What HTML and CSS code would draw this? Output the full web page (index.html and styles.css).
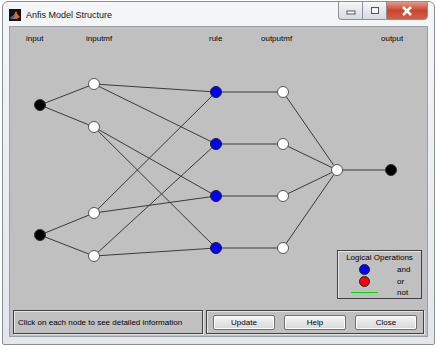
FILE: index.html
```html
<!DOCTYPE html>
<html lang="en">
<head>
    <meta charset="UTF-8">
    <title>Anfis Model Structure</title>
    <link rel="stylesheet" href="styles.css">
</head>
<body>
    <div class="window">
        <div class="titlebar">
            <svg class="app-icon" width="12" height="12" viewBox="0 0 12 12">
                <rect width="12" height="12" fill="#111"/>
                <path d="M1 9 L5 6 L7 2 L9 6 L11 8 L8 10 L4 10 Z" fill="#e06a1a"/>
                <path d="M1 9 L5 6 L6 8 L3 10 Z" fill="#2a6ad0"/>
            </svg>
            <span class="title">Anfis Model Structure</span>
            <div class="controls">
                <div class="ctl">
                    <svg width="10" height="8" viewBox="0 0 10 8"><rect x="1" y="4" width="8" height="3" fill="#fff" stroke="#555" stroke-width="1"/></svg>
                </div>
                <div class="ctl">
                    <svg width="10" height="9" viewBox="0 0 10 9"><rect x="1.5" y="1.5" width="7" height="6" fill="none" stroke="#555" stroke-width="1"/><rect x="2.5" y="3" width="5" height="3.5" fill="#fff"/></svg>
                </div>
                <div class="ctl ctl-close">
                    <svg width="12" height="10" viewBox="0 0 12 10"><path d="M2 1 L10 9 M10 1 L2 9" stroke="#fff" stroke-width="2.5"/></svg>
                </div>
            </div>
        </div>
        <div class="client">
            <div class="canvas">
                <svg class="graph" width="419" height="280" viewBox="0 0 419 280">
                    <g class="labels">
                        <text x="16" y="14">input</text>
                        <text x="76" y="14">inputmf</text>
                        <text x="199" y="14">rule</text>
                        <text x="251" y="14">outputmf</text>
                        <text x="371" y="14">output</text>
                    </g>
                    <g class="edges">
                        <line x1="30" y1="78" x2="84" y2="57"/>
                        <line x1="30" y1="78" x2="84" y2="100"/>
                        <line x1="30" y1="208" x2="84" y2="186"/>
                        <line x1="30" y1="208" x2="84" y2="229"/>

                        <line x1="84" y1="57" x2="206" y2="65"/>
                        <line x1="84" y1="57" x2="206" y2="117"/>
                        <line x1="84" y1="100" x2="206" y2="169"/>
                        <line x1="84" y1="100" x2="206" y2="221"/>
                        <line x1="84" y1="186" x2="206" y2="65"/>
                        <line x1="84" y1="186" x2="206" y2="169"/>
                        <line x1="84" y1="229" x2="206" y2="117"/>
                        <line x1="84" y1="229" x2="206" y2="221"/>

                        <line x1="206" y1="65" x2="273" y2="65"/>
                        <line x1="206" y1="117" x2="273" y2="117"/>
                        <line x1="206" y1="169" x2="273" y2="169"/>
                        <line x1="206" y1="221" x2="273" y2="221"/>

                        <line x1="273" y1="65" x2="327" y2="143"/>
                        <line x1="273" y1="117" x2="327" y2="143"/>
                        <line x1="273" y1="169" x2="327" y2="143"/>
                        <line x1="273" y1="221" x2="327" y2="143"/>
                        <line x1="327" y1="143" x2="381" y2="143"/>
                    </g>
                    <g class="node-in">
                        <circle cx="30" cy="78" r="5.5"/>
                        <circle cx="30" cy="208" r="5.5"/>
                        <circle cx="381" cy="143" r="5.5"/>
                    </g>
                    <g class="node-mf">
                        <circle cx="84" cy="57" r="5.5"/>
                        <circle cx="84" cy="100" r="5.5"/>
                        <circle cx="84" cy="186" r="5.5"/>
                        <circle cx="84" cy="229" r="5.5"/>
                        <circle cx="273" cy="65" r="5.5"/>
                        <circle cx="273" cy="117" r="5.5"/>
                        <circle cx="273" cy="169" r="5.5"/>
                        <circle cx="273" cy="221" r="5.5"/>
                        <circle cx="327" cy="143" r="5.5"/>
                    </g>
                    <g class="node-and">
                        <circle cx="206" cy="65" r="5.5"/>
                        <circle cx="206" cy="117" r="5.5"/>
                        <circle cx="206" cy="169" r="5.5"/>
                        <circle cx="206" cy="221" r="5.5"/>
                    </g>
                </svg>

                <div class="legend">
                    <div class="legend-title">Logical Operations</div>
                    <div class="legend-row">
                        <span class="swatch"><span class="dot dot-and"></span></span>
                        <span>and</span>
                    </div>
                    <div class="legend-row">
                        <span class="swatch"><span class="dot dot-or"></span></span>
                        <span>or</span>
                    </div>
                    <div class="legend-row">
                        <span class="swatch"><span class="line-not"></span></span>
                        <span>not</span>
                    </div>
                </div>
            </div>

            <div class="bottom">
                <div class="frame status">Click on each node to see detailed information</div>
                <div class="frame buttons">
                    <button>Update</button>
                    <button>Help</button>
                    <button>Close</button>
                </div>
            </div>
        </div>
    </div>
</body>
</html>
```

FILE: styles.css
```css
body {
    margin: 0;
    background-color: #ffffff;
    font-family: "Liberation Sans", Arial, sans-serif;
    font-size: 8px;
    color: #000;
}

.window {
    margin: 1px 2px 0 2px;
    width: 433px;
    height: 344px;
    box-sizing: border-box;
    border: 1px solid #8a8f96;
    border-radius: 6px 6px 2px 2px;
    background: linear-gradient(to bottom, #f4f6f8, #e3e6ea);
    padding: 0 6px 7px 6px;
    display: flex;
    flex-direction: column;
}

.titlebar {
    height: 24px;
    display: flex;
    align-items: center;
    gap: 5px;
}

.app-icon {
    margin-top: 1px;
}

.title {
    font-size: 9px;
    color: #111;
    margin-top: 1px;
}

.controls {
    margin-left: auto;
    align-self: flex-start;
    display: flex;
    margin-top: -1px;
}

.ctl {
    width: 23px;
    height: 17px;
    border: 1px solid #8b919a;
    border-right: none;
    background: linear-gradient(to bottom, #f4f6f9, #d6dbe2);
    display: flex;
    align-items: center;
    justify-content: center;
}

.ctl:first-child {
    border-radius: 0 0 0 4px;
}

.ctl-close {
    width: 40px;
    border-right: 1px solid #8b919a;
    border-radius: 0 0 4px 0;
    background: linear-gradient(to bottom, #e59a8a, #c9452f 50%, #d2604b);
}

.client {
    flex: 1;
    background-color: #c0c0c0;
    border: 1px solid #9aa0a8;
    display: flex;
    flex-direction: column;
}

.canvas {
    position: relative;
    height: 283px;
}

.graph {
    display: block;
}

.labels text {
    font-family: "Liberation Sans", Arial, sans-serif;
    font-size: 8px;
    fill: #000;
}

.edges line {
    stroke: #3a3a3a;
    stroke-width: 1;
}

.node-in circle {
    fill: #000;
    stroke: #333;
    stroke-width: 1;
}

.node-mf circle {
    fill: #fff;
    stroke: #555;
    stroke-width: 1;
}

.node-and circle {
    fill: #0000ff;
    stroke: #222;
    stroke-width: 1;
}

.legend {
    position: absolute;
    left: 327px;
    top: 223px;
    width: 85px;
    height: 49px;
    border: 1px solid #404040;
    box-shadow: inset 1px 1px 0 #e8e8e8;
    box-sizing: border-box;
    padding-top: 2px;
}

.legend-title {
    text-align: center;
    font-size: 8px;
    line-height: 10px;
    margin-bottom: 1px;
}

.legend-row {
    display: flex;
    align-items: center;
    height: 11.5px;
    line-height: 11px;
}

.swatch {
    width: 53px;
    margin-right: 6px;
    display: flex;
    justify-content: center;
}

.dot {
    width: 11px;
    height: 11px;
    border-radius: 50%;
    border: 1px solid #222;
    box-sizing: border-box;
}

.dot-and {
    background-color: #0000ff;
}

.dot-or {
    background-color: #ff0000;
}

.line-not {
    width: 27px;
    height: 0;
    border-top: 1px solid #00e000;
}

.bottom {
    display: flex;
    gap: 3px;
    padding: 0 3px;
}

.frame {
    height: 24px;
    box-sizing: border-box;
    border: 1px solid #404040;
    box-shadow: inset 1px 1px 0 #e6e6e6, 1px 1px 0 #e6e6e6;
}

.status {
    width: 190px;
    display: flex;
    align-items: center;
    padding-left: 4px;
}

.buttons {
    flex: 1;
    display: flex;
    align-items: center;
    gap: 9px;
    padding: 0 6px;
}

button {
    flex: 1;
    height: 15px;
    padding: 0;
    font-family: "Liberation Sans", Arial, sans-serif;
    font-size: 8px;
    color: #000;
    border: 1px solid #707070;
    border-radius: 2px;
    background: linear-gradient(to bottom, #f6f6f6, #e6e6e6 50%, #d8d8d8);
    box-shadow: inset 0 0 0 1px #fcfcfc;
}
```
